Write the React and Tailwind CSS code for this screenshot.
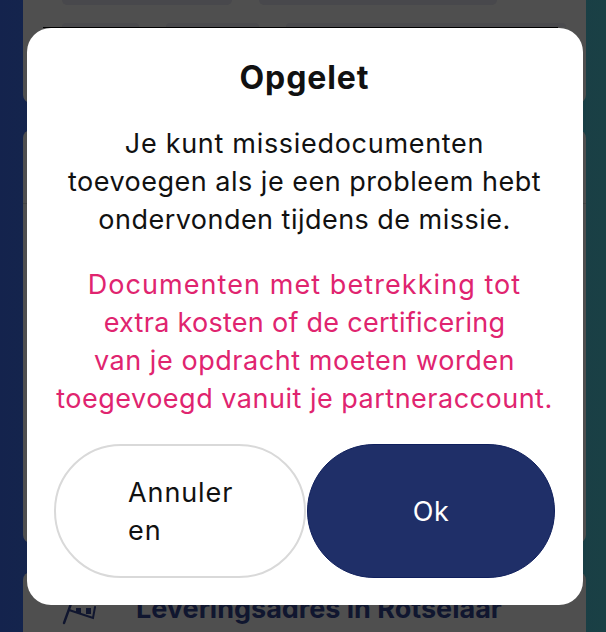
import React from 'react';

const Line = ({ className = '', children }) => (
  <div className={`whitespace-nowrap ${className}`}>{children}</div>
);

export default function App() {
  return (
    <div className="relative h-[632px] w-[606px] overflow-hidden bg-gradient-to-r from-[#14234d] to-[#1a4045] pl-[23px] pr-[20px] font-['Inter',sans-serif]">
      <div className="h-[103px] rounded-b-[8px] bg-[#4f4f4f]">
        <div className="flex h-[23px] gap-[27px] pl-[39px]">
          <div className="h-[5px] w-[170px] rounded-b-[12px] bg-[#48484c]" />
          <div className="h-[5px] w-[238px] rounded-b-[12px] bg-[#48484c]" />
        </div>
        <div className="flex h-[4px] gap-[27px] pl-[39px]">
          <div className="w-[77px] rounded-t-[12px] bg-[#4a4a4d]" />
          <div className="w-[93px] rounded-t-[12px] bg-[#4a4a4d]" />
          <div className="w-[280px] rounded-t-[12px] bg-[#4a4a4d]" />
        </div>
        <div className="ml-[20px] h-px w-[515px] bg-black" />
      </div>
      <div className="mt-[27px] h-[413px] rounded-[8px] bg-[#4f4f4f]">
        <div className="h-[74px] border-b border-[#444444]" />
      </div>
      <div className="mt-[29px] flex h-[60px] items-start rounded-t-[8px] bg-[#4f4f4f] pl-[39px] pr-[10px] pt-[25px]">
        <svg className="shrink-0" width="34" height="28" viewBox="0 0 34 28" fill="none" stroke="#10162f" strokeWidth="2.4" strokeLinecap="round">
          <path d="M2 26 L10 4" />
          <path d="M7 13 L31 21 L33 10" strokeWidth="2" />
          <path d="M14 11 h5 v5 h-5z M24 11 h5 v6 h-5z" fill="#10162f" stroke="none" />
        </svg>
        <span className="ml-[40px] mt-[2px] whitespace-nowrap text-[27px] font-bold leading-[20px] text-[#10162f]">Leveringsadres in Rotselaar</span>
      </div>

      <div className="absolute left-[27px] top-[28px] flex h-[577px] w-[556px] flex-col items-center rounded-[24px] bg-white pl-[27px] pr-[28px] pt-[30px]">
        <h1 className="text-[32px] font-bold leading-[40px] tracking-[0.9px] text-[#111111]">Opgelet</h1>
        <div className="mt-[27px] text-center text-[27px] leading-[38px] text-[#111111]">
          <Line className="tracking-[0.7px]">Je kunt missiedocumenten</Line>
          <Line className="tracking-[0.5px]">toevoegen als je een probleem hebt</Line>
          <Line className="tracking-[0.47px]">ondervonden tijdens de missie.</Line>
        </div>
        <div className="mt-[27px] text-center text-[27px] leading-[38px] text-[#e0246f]">
          <Line className="tracking-[1.07px]">Documenten met betrekking tot</Line>
          <Line className="tracking-[0.28px]">extra kosten of de certificering</Line>
          <Line className="tracking-[0.55px]">van je opdracht moeten worden</Line>
          <Line className="tracking-[0.5px]">toegevoegd vanuit je partneraccount.</Line>
        </div>
        <div className="mt-[26px] flex w-full gap-px">
          <button className="flex h-[134px] w-[252px] flex-col justify-center rounded-[67px] border-2 border-[#d9d9d9] bg-white pl-[72px] pt-[2px] text-left text-[27px] leading-[38px] tracking-[0.9px] text-[#111111]">
            <span>Annuler</span>
            <span>en</span>
          </button>
          <button className="flex h-[134px] flex-1 items-center justify-center rounded-[67px] border border-[#0f1f5c] bg-[#1f2f68] pt-[2px] text-[27px] tracking-[0.5px] text-white">
            Ok
          </button>
        </div>
      </div>
    </div>
  );
}
